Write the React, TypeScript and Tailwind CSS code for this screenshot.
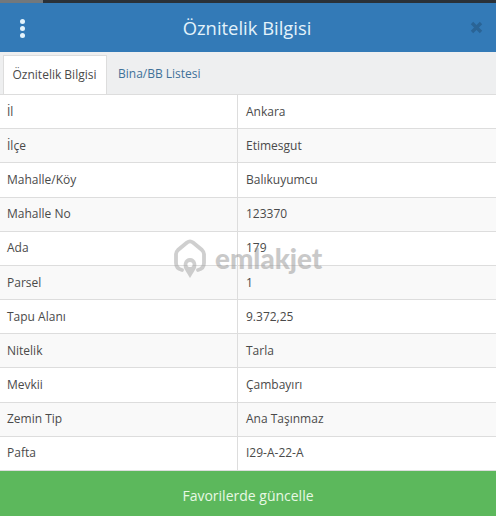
const rows = [
  { label: "İl", value: "Ankara" },
  { label: "İlçe", value: "Etimesgut" },
  { label: "Mahalle/Köy", value: "Balıkuyumcu" },
  { label: "Mahalle No", value: "123370" },
  { label: "Ada", value: "179" },
  { label: "Parsel", value: "1" },
  { label: "Tapu Alanı", value: "9.372,25" },
  { label: "Nitelik", value: "Tarla" },
  { label: "Mevkii", value: "Çambayırı" },
  { label: "Zemin Tip", value: "Ana Taşınmaz" },
  { label: "Pafta", value: "I29-A-22-A" },
];

export default function App() {
  return (
    <div className="relative flex h-[516px] w-[496px] flex-col overflow-hidden bg-white font-['Open_Sans',sans-serif] text-[12px] text-[#4a4a4a]">
      <div className="flex h-[3px] bg-[#2a3138]">
        <div className="w-[43px] bg-[#73787c]" />
      </div>

      <div className="relative flex h-[49px] items-center justify-center bg-[#337ab7] pr-[2px] text-white">
        <span className="absolute left-[20px] top-[16px] flex flex-col gap-[2px]">
          <span className="h-[5px] w-[5px] rounded-full bg-[#e4f3fb]" />
          <span className="h-[5px] w-[5px] rounded-full bg-[#e4f3fb]" />
          <span className="h-[5px] w-[5px] rounded-full bg-[#e4f3fb]" />
        </span>
        <span className="text-[18.4px] leading-[50px] text-[#e4f3fb]">Öznitelik Bilgisi</span>
        <svg className="absolute left-[470px] top-[18px]" width="13" height="13" viewBox="0 0 13 13">
          <path d="M2 2 L11 11 M11 2 L2 11" stroke="#2a6496" strokeWidth="3.4" />
        </svg>
      </div>

      <div className="flex h-[42px] items-end bg-[#eeeff0] pl-[3px]">
        <div className="flex h-[39px] w-[104px] items-center justify-center border-x border-t border-[#dddddd] bg-white pr-[1px]">
          Öznitelik Bilgisi
        </div>
        <div className="flex h-[39px] items-center px-[11px] text-[#3f7199]">Bina/BB Listesi</div>
      </div>

      <div className="flex-1 border-t border-[#dddddd]">
        {rows.map((r, i) => (
          <div
            key={r.label}
            className={`grid h-[34.2px] grid-cols-[238px_1fr] border-b border-[#dddddd] ${i % 2 === 0 ? "bg-white" : "bg-[#f9f9f9]"}`}
          >
            <div className="flex items-center border-r border-[#dddddd] pl-[7px]">{r.label}</div>
            <div className="flex items-center pl-[8px]">{r.value}</div>
          </div>
        ))}
      </div>

      <div className="flex h-[45px] items-center justify-center bg-[#5cb85c] pt-[4px] text-[14px] text-[#e8f8e4]">
        Favorilerde güncelle
      </div>

      <div className="absolute left-[174px] top-[239px] flex items-center gap-[9px] opacity-50">
        <svg width="32" height="40" viewBox="0 0 32 40" fill="none">
          <path
            d="M8 31 C4 30 2 28 2 24 V15 C2 13 3 12 4 11 L13 3.5 C15 2 17 2 19 3.5 L28 11 C29 12 30 13 30 15 V24 C30 28 28 30 24 31"
            stroke="#a0a0a0"
            strokeWidth="3.8"
            strokeLinecap="round"
          />
          <path d="M16 39 L10.5 30 C8.5 26 10 19 16 19 C22 19 23.5 26 21.5 30 Z" fill="#a0a0a0" />
          <circle cx="16" cy="25.5" r="2.6" fill="#fff" />
        </svg>
        <span className="font-['Lato',sans-serif] text-[27.8px] font-black leading-[38px] text-[#949494]">
          emlakjet
        </span>
      </div>
    </div>
  );
}
